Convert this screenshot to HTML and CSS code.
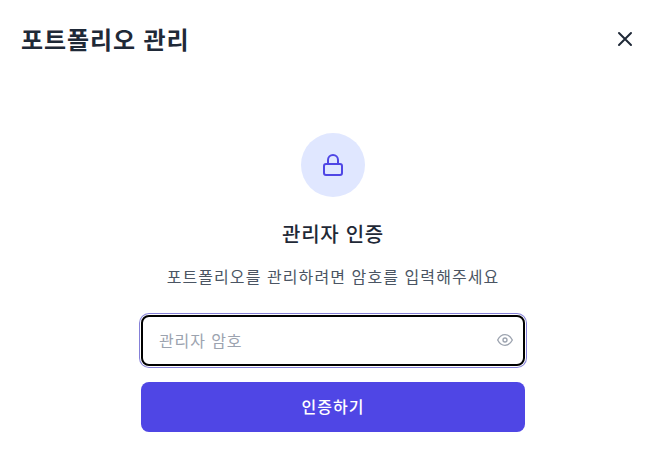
FILE: index.html
```html
<!DOCTYPE html>
<html lang="ko">
<head>
    <meta charset="UTF-8">
    <title>포트폴리오 관리</title>
    <link rel="stylesheet" href="styles.css">
</head>
<body>
    <div class="modal">
        <!-- Header -->
        <div class="modal-header">
            <h1 class="modal-title">포트폴리오 관리</h1>
            <button class="close-btn">
                <svg width="24" height="24" viewBox="0 0 24 24" fill="none" stroke="#1f2937" stroke-width="2" stroke-linecap="round" stroke-linejoin="round"><path d="M18 6L6 18M6 6l12 12"/></svg>
            </button>
        </div>

        <!-- Auth form -->
        <div class="auth">
            <div class="lock-circle">
                <svg width="24" height="24" viewBox="0 0 24 24" fill="none" stroke="#4f46e5" stroke-width="2" stroke-linecap="round" stroke-linejoin="round"><rect x="3" y="11" width="18" height="11" rx="2"/><path d="M7 11V7a5 5 0 0 1 10 0v4"/></svg>
            </div>
            <h2 class="auth-title">관리자 인증</h2>
            <p class="auth-text">포트폴리오를 관리하려면 암호를 입력해주세요</p>
            <div class="input-wrap">
                <input type="password" class="password-input" placeholder="관리자 암호">
                <svg class="eye-icon" width="16" height="16" viewBox="0 0 24 24" fill="none" stroke="#9ca3af" stroke-width="2" stroke-linecap="round" stroke-linejoin="round"><path d="M1 12s4-8 11-8 11 8 11 8-4 8-11 8-11-8-11-8z"/><circle cx="12" cy="12" r="3"/></svg>
            </div>
            <button class="submit-btn">인증하기</button>
        </div>
    </div>
</body>
</html>
```

FILE: styles.css
```css
* {
    margin: 0;
    padding: 0;
    box-sizing: border-box;
    font-family: "Noto Sans CJK KR", sans-serif;
}

body {
    background-color: #fff;
    width: 666px;
    height: 451px;
    overflow: hidden;
}

.modal-header {
    display: flex;
    justify-content: space-between;
    align-items: center;
    height: 80px;
    padding: 0 29px 2px 21px;
}

.modal-title {
    font-size: 24px;
    font-weight: 700;
    letter-spacing: 0.9px;
    color: #1f2937;
    margin-bottom: 2px;
}

.close-btn {
    display: flex;
    background: none;
    border: none;
}

.auth {
    display: flex;
    flex-direction: column;
    align-items: center;
    padding-top: 53px;
}

.lock-circle {
    display: flex;
    align-items: center;
    justify-content: center;
    width: 64px;
    height: 64px;
    border-radius: 50%;
    background-color: #e0e7ff;
    margin-bottom: 23px;
}

.auth-title {
    font-size: 20px;
    font-weight: 500;
    line-height: 28px;
    letter-spacing: 0.7px;
    color: #1f2937;
    margin-bottom: 16px;
}

.auth-text {
    font-size: 16px;
    line-height: 24px;
    letter-spacing: 1.08px;
    color: #4b5563;
    margin-bottom: 27px;
}

.input-wrap {
    position: relative;
    width: 384px;
    margin-bottom: 16px;
}

.password-input {
    display: block;
    width: 100%;
    height: 51px;
    padding: 0 40px 2px 16px;
    border: 2px solid #000;
    border-radius: 8px;
    outline: none;
    box-shadow: 0 0 0 1px #fff, 0 0 0 2px #8580d8;
    font-size: 16px;
    letter-spacing: 0.9px;
}

.password-input::placeholder {
    color: #9ca3af;
}

.eye-icon {
    position: absolute;
    top: 17px;
    right: 12px;
}

.submit-btn {
    width: 384px;
    height: 50px;
    padding-bottom: 2px;
    border: none;
    border-radius: 8px;
    background-color: #4f46e5;
    color: #fff;
    font-size: 16px;
    font-weight: 500;
    letter-spacing: 1px;
}
```
